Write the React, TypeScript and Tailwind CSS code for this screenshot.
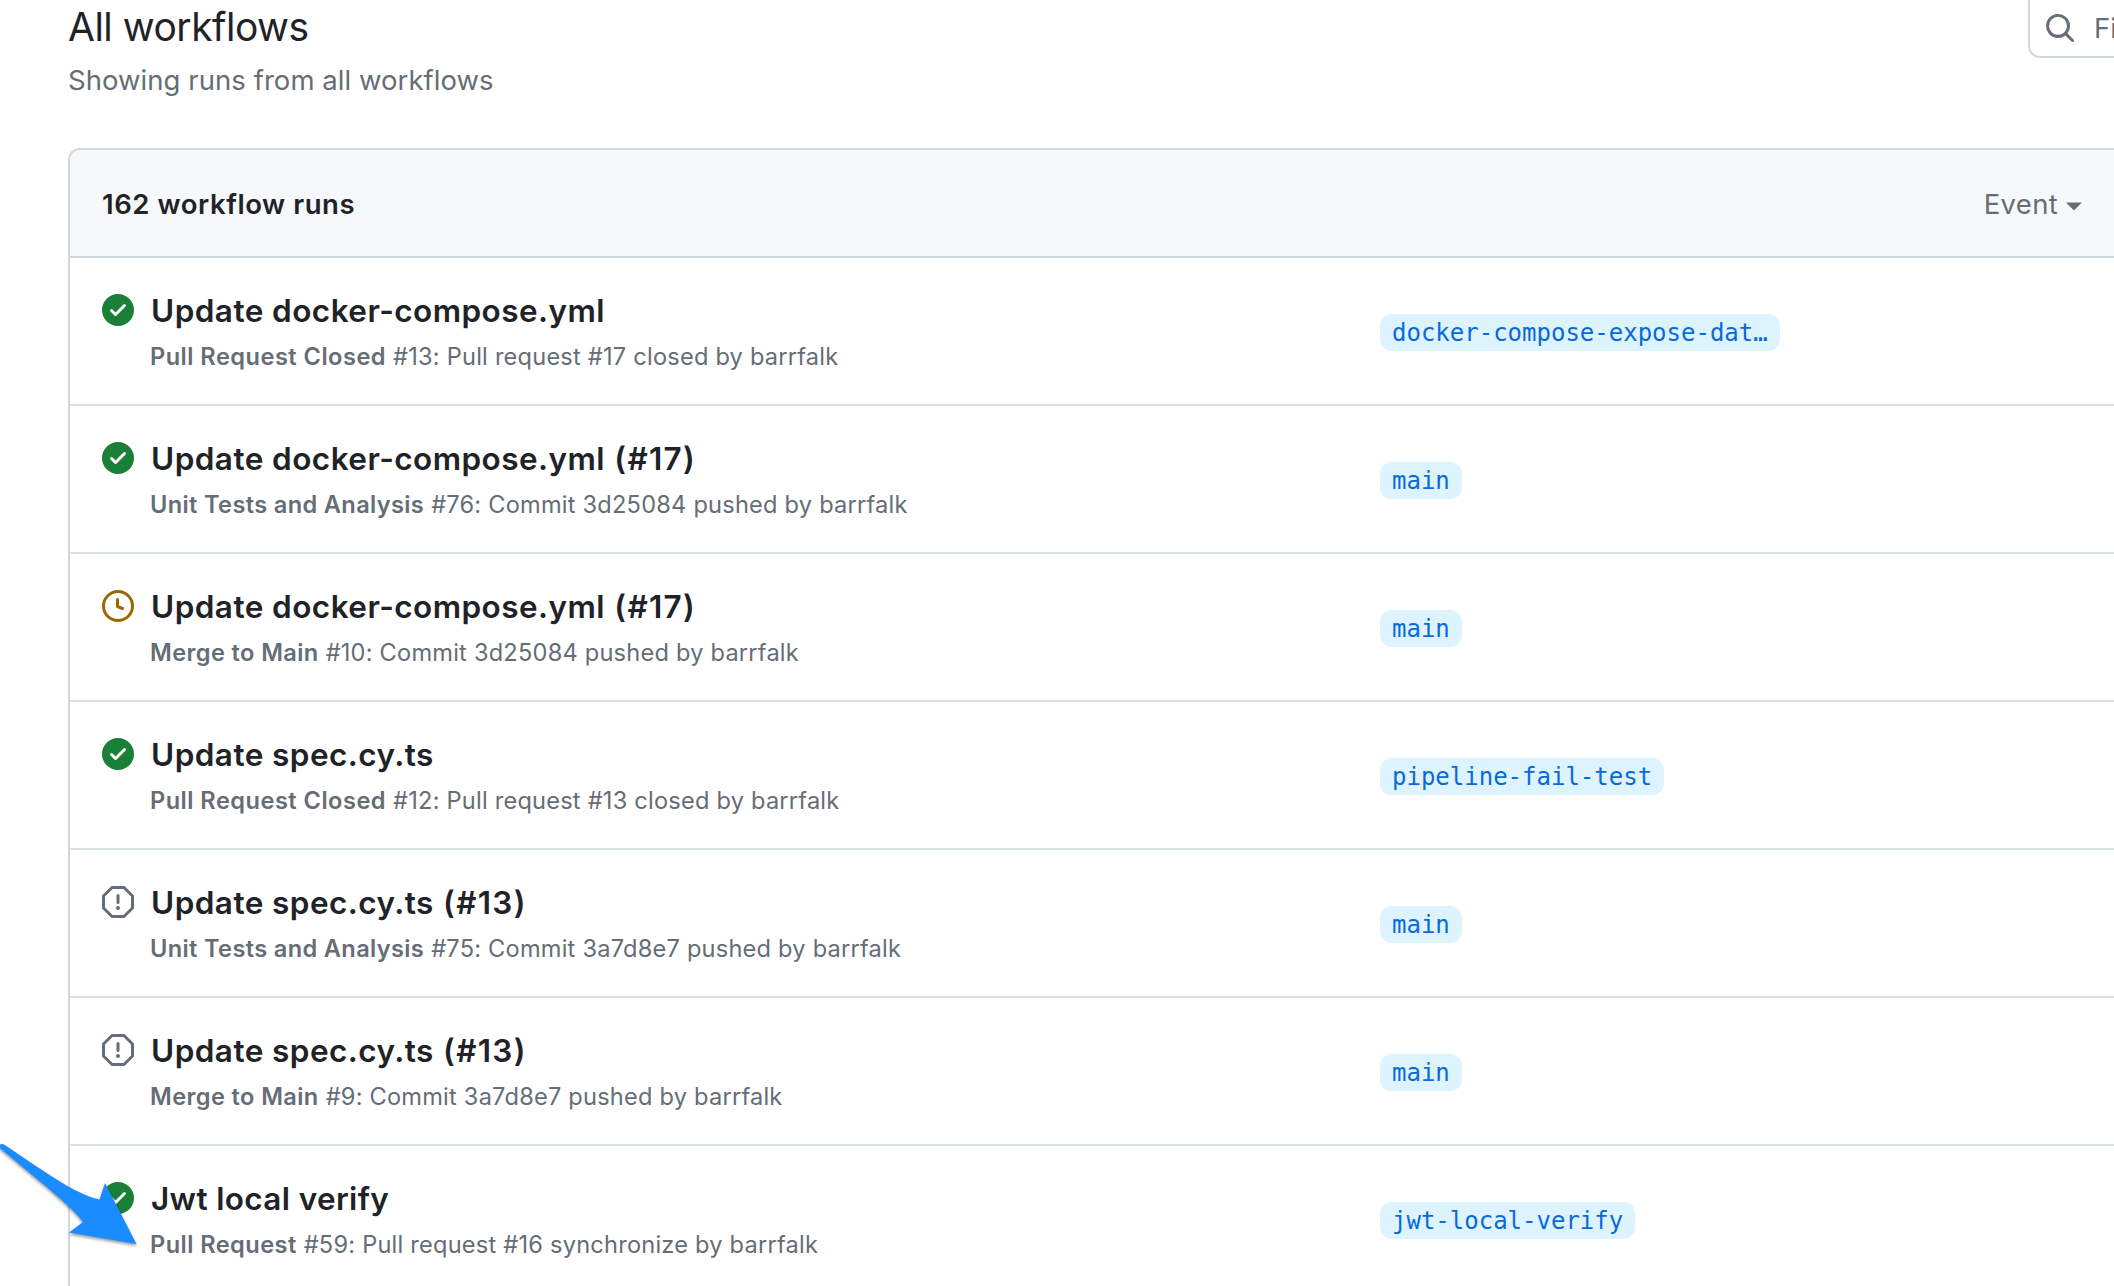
import React from "react";

type Status = "success" | "queued" | "stopped";

type Run = {
  status: Status;
  title: string;
  titleClass: string;
  number?: string;
  workflow: string;
  workflowClass: string;
  detail: string;
  branch: string;
};

const runs: Run[] = [
  {
    status: "success",
    title: "Update docker-compose.yml",
    titleClass: "tracking-[0.45px]",
    workflow: "Pull Request Closed",
    workflowClass: "tracking-[0.48px]",
    detail: "#13: Pull request #17 closed by barrfalk",
    branch: "docker-compose-expose-dat…",
  },
  {
    status: "success",
    title: "Update docker-compose.yml",
    titleClass: "tracking-[0.45px]",
    number: "(#17)",
    workflow: "Unit Tests and Analysis",
    workflowClass: "tracking-[0.35px]",
    detail: "#76: Commit 3d25084 pushed by barrfalk",
    branch: "main",
  },
  {
    status: "queued",
    title: "Update docker-compose.yml",
    titleClass: "tracking-[0.45px]",
    number: "(#17)",
    workflow: "Merge to Main",
    workflowClass: "tracking-[0.39px]",
    detail: "#10: Commit 3d25084 pushed by barrfalk",
    branch: "main",
  },
  {
    status: "success",
    title: "Update spec.cy.ts",
    titleClass: "tracking-[0.45px]",
    workflow: "Pull Request Closed",
    workflowClass: "tracking-[0.48px]",
    detail: "#12: Pull request #13 closed by barrfalk",
    branch: "pipeline-fail-test",
  },
  {
    status: "stopped",
    title: "Update spec.cy.ts",
    titleClass: "tracking-[0.45px]",
    number: "(#13)",
    workflow: "Unit Tests and Analysis",
    workflowClass: "tracking-[0.35px]",
    detail: "#75: Commit 3a7d8e7 pushed by barrfalk",
    branch: "main",
  },
  {
    status: "stopped",
    title: "Update spec.cy.ts",
    titleClass: "tracking-[0.45px]",
    number: "(#13)",
    workflow: "Merge to Main",
    workflowClass: "tracking-[0.39px]",
    detail: "#9: Commit 3a7d8e7 pushed by barrfalk",
    branch: "main",
  },
  {
    status: "success",
    title: "Jwt local verify",
    titleClass: "tracking-[0.36px]",
    workflow: "Pull Request",
    workflowClass: "tracking-[0.44px]",
    detail: "#59: Pull request #16 synchronize by barrfalk",
    branch: "jwt-local-verify",
  },
];

const icons: Record<Status, { color: string; path: string }> = {
  success: {
    color: "text-[#1a7f37]",
    path: "M8 16A8 8 0 1 1 8 0a8 8 0 0 1 0 16Zm3.78-9.72a.751.751 0 0 0-.018-1.042.751.751 0 0 0-1.042-.018L6.75 9.19 5.28 7.72a.751.751 0 0 0-1.042.018.751.751 0 0 0-.018 1.042l2 2a.75.75 0 0 0 1.06 0Z",
  },
  queued: {
    color: "text-[#9a6700]",
    path: "M8 0a8 8 0 1 1 0 16A8 8 0 0 1 8 0ZM1.5 8a6.5 6.5 0 1 0 13 0 6.5 6.5 0 0 0-13 0Zm7-3.25v2.992l2.028.812a.75.75 0 0 1-.557 1.392l-2.5-1A.751.751 0 0 1 7 8.25v-3.5a.75.75 0 0 1 1.5 0Z",
  },
  stopped: {
    color: "text-[#656d76]",
    path: "M4.47.22A.749.749 0 0 1 5 0h6c.199 0 .389.079.53.22l4.25 4.25c.141.14.22.331.22.53v6a.749.749 0 0 1-.22.53l-4.25 4.25A.749.749 0 0 1 11 16H5a.749.749 0 0 1-.53-.22L.22 11.53A.749.749 0 0 1 0 11V5c0-.199.079-.389.22-.53Zm.84 1.28L1.5 5.31v5.38l3.81 3.81h5.38l3.81-3.81V5.31L10.69 1.5ZM8 4a.75.75 0 0 1 .75.75v3.5a.75.75 0 0 1-1.5 0v-3.5A.75.75 0 0 1 8 4Zm0 8a1 1 0 1 1 0-2 1 1 0 0 1 0 2Z",
  },
};

function Icon({ path, className }: { path: string; className: string }) {
  return (
    <svg viewBox="0 0 16 16" fill="currentColor" className={`size-8 shrink-0 ${className}`}>
      <path d={path} />
    </svg>
  );
}

function SearchField() {
  return (
    <div className="-mt-5 flex h-[78px] w-[86px] shrink-0 items-start gap-[18px] overflow-hidden rounded-bl-[12px] border-2 border-r-0 border-[#d0d7de] bg-white pt-[30px] pl-[14px]">
      <Icon
        className="text-[#656d76]"
        path="M10.68 11.74a6 6 0 0 1-7.922-8.982 6 6 0 0 1 8.982 7.922l3.04 3.04a.749.749 0 0 1-.326 1.275.749.749 0 0 1-.734-.215ZM11.5 7a4.499 4.499 0 1 0-8.997 0A4.499 4.499 0 0 0 11.5 7Z"
      />
      <span className="shrink-0 text-[27.5px] leading-8 text-[#656d76]">Fi</span>
    </div>
  );
}

function RunRow({ run }: { run: Run }) {
  const icon = icons[run.status];
  return (
    <li className="flex h-[148px] border-t-2 border-[#d8dee4] first:h-[146px] first:border-t-0">
      <div className="flex w-[1310px] shrink-0 gap-4 pt-7 pl-8">
        <Icon path={icon.path} className={`mt-2 ${icon.color}`} />
        <div>
          <h3 className={`pl-px text-[31.5px] leading-[49px] font-semibold whitespace-nowrap text-[#1f2328] ${run.titleClass}`}>
            {run.title}
            {run.number && <span className="tracking-[1.3px]"> {run.number}</span>}
          </h3>
          <p className="mt-[3px] flex gap-[7px] text-[23.6px] leading-[37px] whitespace-nowrap text-[#656d76]">
            <span className={`font-semibold ${run.workflowClass}`}>{run.workflow}</span>
            <span className="tracking-[0.22px]">{run.detail}</span>
          </p>
        </div>
      </div>
      <div className="pt-14">
        <span className="flex h-[37px] items-center rounded-[12px] bg-[#ddf4ff] px-3 pt-[2px] font-['DejaVu_Sans_Mono',monospace] text-[24px] leading-[35px] text-[#0969da]">
          {run.branch}
        </span>
      </div>
    </li>
  );
}

function Arrow() {
  return (
    <svg
      viewBox="0 0 150 116"
      className="absolute top-[1136px] left-0 h-[116px] w-[150px] drop-shadow-[0_2px_1.5px_rgba(0,0,0,0.4)]"
    >
      <path
        fill="#1a8cff"
        d="M-1 9.5 Q1 7 4.5 8.7 C30 26 62 48 78 55.500 Q90 61.5 99.500 63.500 L105 47 L136.500 108 L69 96.500 L83 86 C76 76 60 62 40 45.500 L1 13 Q-2 11.500 -1 9.500Z"
      />
    </svg>
  );
}

export default function App() {
  return (
    <main className="relative h-[1286px] w-[2114px] overflow-hidden bg-white pl-[68px] font-['Inter',sans-serif]">
      <div className="flex h-[148px] justify-between">
        <header>
          <h1 className="text-[39px] leading-[54px] tracking-[-0.5px] text-[#1f2328]">All workflows</h1>
          <p className="mt-[5px] text-[27.5px] leading-[42px] tracking-[0.05px] text-[#656d76]">
            Showing runs from all workflows
          </p>
        </header>
        <SearchField />
      </div>
      <section className="h-[1160px] rounded-tl-[12px] border-2 border-r-0 border-[#d0d7de]">
        <div className="flex h-[108px] items-center justify-between rounded-tl-[10px] border-b-2 border-[#d0d7de] bg-[#f6f8fa] pr-8 pl-8 text-[27.5px]">
          <h2 className="pt-[3px] font-semibold tracking-[0.56px] text-[#1f2328]">162 workflow runs</h2>
          <button className="flex items-center gap-2 pt-[3px] tracking-[0.3px] text-[#656d76]">
            Event
            <svg viewBox="0 0 16 9" className="mt-1 h-[9px] w-4" fill="currentColor">
              <path d="M0 0.500H16L8 8.500Z" />
            </svg>
          </button>
        </div>
        <ul>
          {runs.map((run, i) => (
            <RunRow key={i} run={run} />
          ))}
        </ul>
      </section>
      <Arrow />
    </main>
  );
}
